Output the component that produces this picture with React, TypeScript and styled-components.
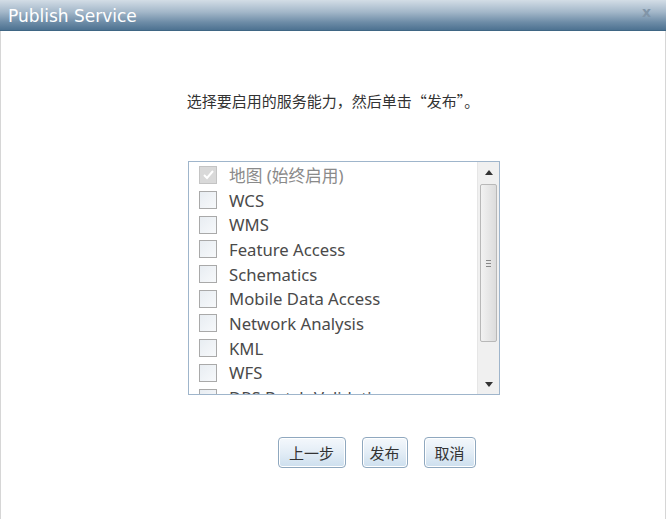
import { FC } from "react";
import styled, { createGlobalStyle } from "styled-components";

const Global = createGlobalStyle`
  html, body { margin: 0; padding: 0; background: #fff; }
  body { font-family: "Noto Sans", "Noto Sans CJK SC", sans-serif; }
`;

const Dialog = styled.div`
  width: 666px;
  height: 519px;
  display: flex;
  flex-direction: column;
  background: #fff;
  box-sizing: border-box;
`;

const TitleBar = styled.div`
  height: 31px;
  display: flex;
  align-items: center;
  justify-content: space-between;
  padding: 1px 15px 0 8px;
  background: linear-gradient(to bottom, #d3dde6 0%, #a3b7c9 40%, #6c8ba6 75%, #4d7291 100%);
  border-bottom: 1px solid #3f6684;
  color: #fff;
  font-family: "DejaVu Sans", "Noto Sans", sans-serif;
  font-size: 17px;
  box-sizing: border-box;
`;

const Close = styled.span`
  color: #8195a8;
  font-size: 14px;
  font-weight: bold;
  margin-top: -8px;
`;

const Body = styled.div`
  flex: 1;
  display: flex;
  flex-direction: column;
  align-items: center;
  border-left: 1px solid #d6d6d6;
  border-right: 1px solid #d6d6d6;
`;

const Prompt = styled.p`
  margin: 59px 0 0 0;
  font-size: 15px;
  color: #333;
  font-family: "Noto Sans CJK SC", sans-serif;
  line-height: 22px;
`;

const ListBox = styled.div`
  margin-top: 49px;
  margin-left: 22px;
  width: 312px;
  height: 234px;
  border: 1px solid #9fb5cb;
  box-sizing: border-box;
  display: flex;
  background: #fff;
`;

const Items = styled.div`
  flex: 1;
  overflow: hidden;
  padding-top: 1px;
`;

const Row = styled.label<{ disabled?: boolean }>`
  display: flex;
  align-items: center;
  height: 24.7px;
  padding-left: 10px;
  gap: 12px;
  font-size: 16.7px;
  color: ${({ disabled }) => (disabled ? "#8a8a8a" : "#4a4a4a")};
  white-space: nowrap;
`;

const Box = styled.span<{ checked?: boolean }>`
  width: 18px;
  height: 18px;
  box-sizing: border-box;
  border: 1px solid ${({ checked }) => (checked ? "#c4c4c4" : "#a9a9a9")};
  background: ${({ checked }) =>
    checked ? "#d9d9d9" : "linear-gradient(135deg, #e8edf2 0%, #f7f9fb 100%)"};
  display: flex;
  align-items: center;
  justify-content: center;
  flex-shrink: 0;
`;

const ScrollBar = styled.div`
  width: 21px;
  display: flex;
  flex-direction: column;
  background: #f0f0f0;
  border-left: 1px solid #e6e6e6;
`;

const Arrow = styled.div`
  height: 20px;
  display: flex;
  align-items: center;
  justify-content: center;
`;

const Thumb = styled.div`
  margin: 2px 2px 0 2px;
  height: 156px;
  border: 1px solid #b8b8b8;
  border-radius: 2px;
  background: linear-gradient(to right, #f2f2f2, #dcdcdc);
  display: flex;
  align-items: center;
  justify-content: center;
`;

const Grip = styled.div`
  width: 5px;
  height: 5px;
  border-top: 1px solid #888;
  border-bottom: 1px solid #888;
  position: relative;
  &::after {
    content: "";
    position: absolute;
    left: 0;
    right: 0;
    top: 2px;
    border-top: 1px solid #888;
  }
`;

const Track = styled.div`
  flex: 1;
`;

const Buttons = styled.div`
  display: flex;
  gap: 16px;
  margin-top: 42px;
  padding-left: 87px;
`;

const Button = styled.button<{ w: number }>`
  width: ${({ w }) => w}px;
  height: 31px;
  border: 1px solid #8fa8bf;
  border-radius: 4px;
  background: linear-gradient(to bottom, #f4f8fc 0%, #e3edf6 50%, #cddfee 100%);
  box-shadow: inset 0 0 0 1px #fff;
  font-family: "Noto Sans CJK SC", sans-serif;
  font-size: 15px;
  color: #333;
  padding: 0;
`;

const items = [
  "WCS",
  "WMS",
  "Feature Access",
  "Schematics",
  "Mobile Data Access",
  "Network Analysis",
  "KML",
  "WFS",
  "DRS Batch Validation",
];

const App: FC = () => {
  return (
    <Dialog>
      <Global />
      <TitleBar>
        <span>Publish Service</span>
        <Close>x</Close>
      </TitleBar>
      <Body>
        <Prompt>选择要启用的服务能力，然后单击“发布”。</Prompt>
        <ListBox>
          <Items>
            <Row disabled>
              <Box checked>
                <svg width="11" height="10" viewBox="0 0 11 10">
                  <path d="M1 5 L4 8 L10 1" stroke="#fff" strokeWidth="2" fill="none" />
                </svg>
              </Box>
              地图 (始终启用)
            </Row>
            {items.map((it) => (
              <Row key={it}>
                <Box />
                {it}
              </Row>
            ))}
          </Items>
          <ScrollBar>
            <Arrow>
              <svg width="8" height="5" viewBox="0 0 8 5">
                <path d="M0 5 L4 0 L8 5 Z" fill="#333" />
              </svg>
            </Arrow>
            <Thumb>
              <Grip />
            </Thumb>
            <Track />
            <Arrow>
              <svg width="8" height="5" viewBox="0 0 8 5">
                <path d="M0 0 L8 0 L4 5 Z" fill="#333" />
              </svg>
            </Arrow>
          </ScrollBar>
        </ListBox>
        <Buttons>
          <Button w={68}>上一步</Button>
          <Button w={46}>发布</Button>
          <Button w={52}>取消</Button>
        </Buttons>
      </Body>
    </Dialog>
  );
};

export default App;
